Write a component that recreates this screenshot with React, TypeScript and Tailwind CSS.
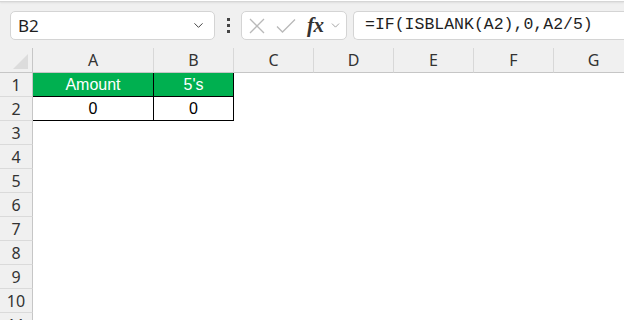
import { ChevronDown } from 'lucide-react';

const cols = ['A', 'B', 'C', 'D', 'E', 'F', 'G'];
const rows = [1, 2, 3, 4, 5, 6, 7, 8, 9, 10, 11];

export default function App() {
  return (
    <div className="w-[624px] h-[320px] overflow-hidden bg-[#f0f0f0] font-['Noto_Sans',sans-serif] text-[#222]">
      {/* top edge */}
      <div className="h-[2px] bg-white border-b border-[#d6d6d6] shadow-[0_1px_2px_rgba(0,0,0,0.08)]" />

      {/* formula bar */}
      <div className="flex items-center h-[46px] pt-[1px] pl-[10px]">
        <div className="flex items-center justify-between w-[205px] h-[29px] bg-white border border-[#d4d4d4] rounded-[5px] pl-[7px] pr-[8px]">
          <span className="text-[17px] leading-none text-[#1f1f1f]">B2</span>
          <ChevronDown className="w-[15px] h-[15px] text-[#444]" strokeWidth={1.6} />
        </div>
        <div className="flex flex-col gap-[3px] ml-[12px] mr-[11px]">
          <span className="w-[3px] h-[3px] bg-[#444]" />
          <span className="w-[3px] h-[3px] bg-[#444]" />
          <span className="w-[3px] h-[3px] bg-[#444]" />
        </div>
        <div className="flex items-center w-[106px] h-[29px] bg-white border border-[#d4d4d4] rounded-[5px] pl-[6px]">
          <svg width="18" height="18" viewBox="0 0 18 18" className="text-[#b9b9b9]">
            <path d="M2 2L16 16M16 2L2 16" stroke="currentColor" strokeWidth="1.3" fill="none" />
          </svg>
          <svg width="20" height="18" viewBox="0 0 20 18" className="ml-[10px] text-[#b9b9b9]">
            <path d="M1 9.5L6.5 15L19 2.5" stroke="currentColor" strokeWidth="1.3" fill="none" />
          </svg>
          <span className="ml-[11px] font-['Liberation_Serif',serif] italic font-bold text-[21px] leading-none text-[#333] tracking-[-0.5px]">
            fx
          </span>
          <ChevronDown className="ml-[5px] w-[13px] h-[13px] text-[#888]" strokeWidth={1.4} />
        </div>
        <div className="flex items-center flex-1 h-[29px] ml-[6px] bg-white border border-[#d4d4d4] border-r-0 rounded-l-[5px] pl-[11px]">
          <span className="font-['Liberation_Mono',monospace] text-[16.5px] leading-none text-[#1f1f1f]">
            =IF(ISBLANK(A2),0,A2/5)
          </span>
        </div>
      </div>

      {/* sheet */}
      <div className="grid grid-cols-[33px_121px_80px_80px_80px_80px_80px_80px] bg-white">
        {/* header row */}
        <div className="h-[25px] bg-[#f0f0f0] border-b border-r border-[#c6c6c6] relative">
          <div className="absolute right-[4px] bottom-[3px] w-0 h-0 border-l-[15px] border-l-transparent border-b-[15px] border-b-[#dcdcdc]" />
        </div>
        {cols.map((c) => (
          <div
            key={c}
            className="h-[25px] bg-[#f0f0f0] border-b border-r border-b-[#c6c6c6] border-r-[#d8d8d8] flex items-center justify-center text-[16px] text-[#333]"
          >
            {c}
          </div>
        ))}

        {rows.map((r) => (
          <Row key={r} n={r} />
        ))}
      </div>
    </div>
  );
}

function Row({ n }: { n: number }) {
  return (
    <>
      <div className="h-[24px] bg-[#f0f0f0] border-r border-b border-r-[#c6c6c6] border-b-[#dadada] flex items-center justify-center text-[16px] text-[#333]">
        {n}
      </div>
      {n === 1 && (
        <>
          <div className="h-[24px] bg-[#00b050] border-b border-r border-black flex items-center justify-center text-[16px] text-white font-['Liberation_Sans',sans-serif]">
            Amount
          </div>
          <div className="h-[24px] bg-[#00b050] border-b border-r border-black flex items-center justify-center text-[16px] text-white font-['Liberation_Sans',sans-serif]">
            5's
          </div>
        </>
      )}
      {n === 2 && (
        <>
          <div className="h-[24px] bg-white border-b border-r border-black flex items-center justify-center text-[16px] text-black font-['Liberation_Sans',sans-serif]">
            0
          </div>
          <div className="h-[24px] bg-white border-b border-r border-black flex items-center justify-center text-[16px] text-black font-['Liberation_Sans',sans-serif]">
            0
          </div>
        </>
      )}
      {n > 2 && (
        <>
          <div className="h-[24px]" />
          <div className="h-[24px]" />
        </>
      )}
      <div className="h-[24px]" />
      <div className="h-[24px]" />
      <div className="h-[24px]" />
      <div className="h-[24px]" />
      <div className="h-[24px]" />
    </>
  );
}
